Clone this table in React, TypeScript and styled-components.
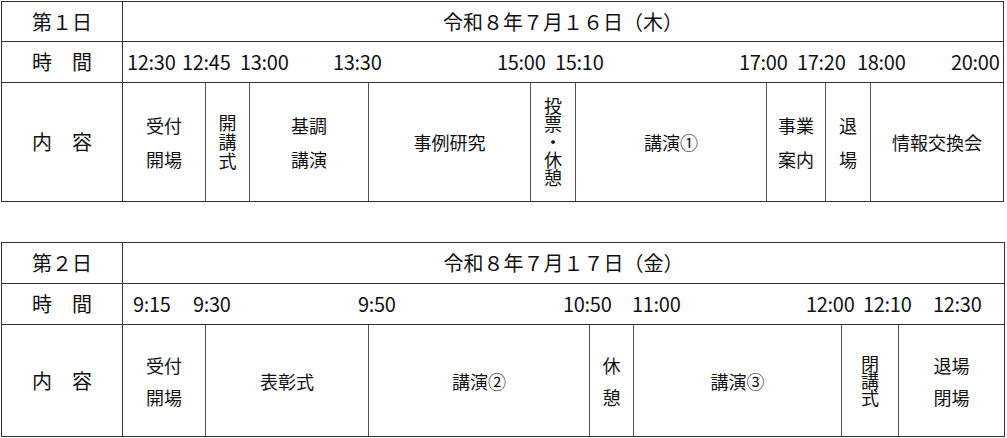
import React from "react";
import styled, { createGlobalStyle } from "styled-components";

const GlobalStyle = createGlobalStyle`
  *, *::before, *::after { box-sizing: border-box; }
  body {
    margin: 0;
    background: #fff;
    color: #111;
    font-family: "Noto Sans CJK JP", "Noto Sans", sans-serif;
  }
`;

const Page = styled.div`
  padding: 1px 0 0 1px;
  display: flex;
  flex-direction: column;
  gap: 40px;
`;

const Table = styled.div<{ $w: number }>`
  width: ${(p) => p.$w}px;
  display: grid;
  grid-template-columns: 121px 1fr;
  border-top: 1px solid #333;
  border-left: 1px solid #333;
`;

const Cell = styled.div<{ $h: number }>`
  height: ${(p) => p.$h}px;
  border-right: 1px solid #333;
  border-bottom: 1px solid #333;
  display: flex;
  align-items: center;
  justify-content: center;
  font-size: 20px;
  line-height: 1;
  white-space: pre;
`;

const TimeCell = styled(Cell)`
  justify-content: flex-start;
  letter-spacing: -0.3px;
`;

const TimeSlot = styled.span<{ $w?: number }>`
  flex: ${(p) => (p.$w ? `0 0 ${p.$w}px` : "1 1 auto")};
  white-space: nowrap;
`;

const ContentRow = styled.div<{ $h: number }>`
  height: ${(p) => p.$h}px;
  display: flex;
  border-right: 1px solid #333;
  border-bottom: 1px solid #333;
`;

const Item = styled.div<{ $w?: number }>`
  flex: ${(p) => (p.$w ? `0 0 ${p.$w}px` : "1 1 auto")};
  border-right: ${(p) => (p.$w ? "1px solid #555" : "none")};
  display: flex;
  flex-direction: column;
  align-items: center;
  justify-content: center;
  font-size: 18px;
`;

const Line = styled.div<{ $lh: number }>`
  line-height: ${(p) => p.$lh}px;
  white-space: nowrap;
`;

const Upright = styled.div<{ $gap: number }>`
  writing-mode: vertical-rl;
  text-orientation: upright;
  line-height: 1;
  letter-spacing: ${(p) => p.$gap}px;
  white-space: nowrap;
`;

type Slot = { text: string; w?: number };
type Entry = { lines: string[]; w?: number; lh: number; vertical?: number };

type Day = {
  width: number;
  heights: [number, number, number];
  label: string;
  date: string;
  lead: number;
  times: Slot[];
  items: Entry[];
};

const days: Day[] = [
  {
    width: 1003,
    heights: [40, 41, 119],
    label: "第１日",
    date: "令和８年７月１６日（木）",
    lead: 4,
    times: [
      { text: "12:30", w: 55 },
      { text: "12:45", w: 58 },
      { text: "13:00", w: 93 },
      { text: "13:30", w: 164 },
      { text: "15:00", w: 58 },
      { text: "15:10", w: 184 },
      { text: "17:00", w: 58 },
      { text: "17:20", w: 60 },
      { text: "18:00", w: 94 },
      { text: "20:00" },
    ],
    items: [
      { lines: ["受付", "開場"], w: 83, lh: 34 },
      { lines: ["開講式"], w: 44, lh: 19, vertical: 1 },
      { lines: ["基調", "講演"], w: 119, lh: 34 },
      { lines: ["事例研究"], w: 162, lh: 34 },
      { lines: ["投票・休憩"], w: 45, lh: 18, vertical: 0 },
      { lines: ["講演①"], w: 191, lh: 34 },
      { lines: ["事業", "案内"], w: 59, lh: 34 },
      { lines: ["退", "場"], w: 45, lh: 34 },
      { lines: ["情報交換会"], lh: 34 },
    ],
  },
  {
    width: 1004,
    heights: [41, 41, 112],
    label: "第２日",
    date: "令和８年７月１７日（金）",
    lead: 10,
    times: [
      { text: "9:15", w: 60 },
      { text: "9:30", w: 165 },
      { text: "9:50", w: 205 },
      { text: "10:50", w: 69 },
      { text: "11:00", w: 174 },
      { text: "12:00", w: 57 },
      { text: "12:10", w: 70 },
      { text: "12:30" },
    ],
    items: [
      { lines: ["受付", "開場"], w: 83, lh: 32 },
      { lines: ["表彰式"], w: 163, lh: 32 },
      { lines: ["講演②"], w: 221, lh: 32 },
      { lines: ["休", "憩"], w: 44, lh: 32 },
      { lines: ["講演③"], w: 208, lh: 32 },
      { lines: ["閉講式"], w: 57, lh: 17, vertical: -1 },
      { lines: ["退場", "閉場"], lh: 32 },
    ],
  },
];

const Schedule: React.FC<{ day: Day }> = ({ day }) => {
  const [h1, h2, h3] = day.heights;
  return (
    <Table $w={day.width}>
      <Cell $h={h1}>{day.label}</Cell>
      <Cell $h={h1}>{day.date}</Cell>
      <Cell $h={h2}>時　間</Cell>
      <TimeCell $h={h2}>
        <TimeSlot $w={day.lead} />
        {day.times.map((t, i) => (
          <TimeSlot key={i} $w={t.w}>
            {t.text}
          </TimeSlot>
        ))}
      </TimeCell>
      <Cell $h={h3}>内　容</Cell>
      <ContentRow $h={h3}>
        {day.items.map((it, i) => (
          <Item key={i} $w={it.w}>
            {it.vertical !== undefined ? (
              <Upright $gap={it.vertical}>{it.lines[0]}</Upright>
            ) : (
              it.lines.map((l, j) => (
                <Line key={j} $lh={it.lh}>
                  {l}
                </Line>
              ))
            )}
          </Item>
        ))}
      </ContentRow>
    </Table>
  );
};

export default function App() {
  return (
    <>
      <GlobalStyle />
      <Page>
        {days.map((d, i) => (
          <Schedule key={i} day={d} />
        ))}
      </Page>
    </>
  );
}
